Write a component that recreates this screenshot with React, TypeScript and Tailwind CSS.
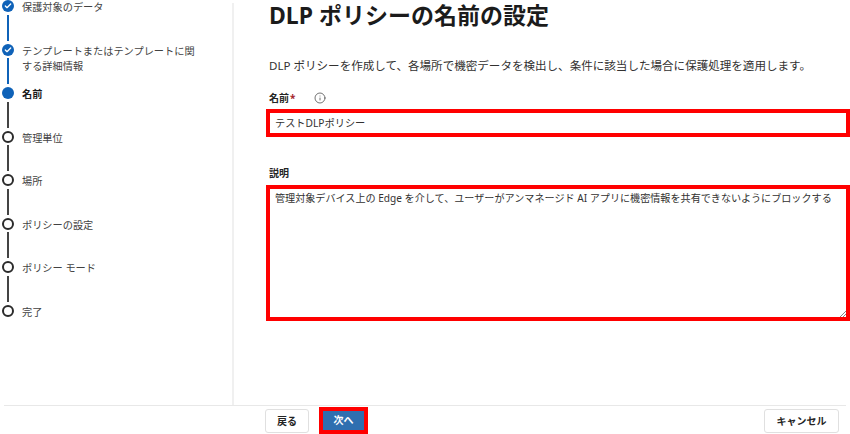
import { Check, Info } from 'lucide-react'

const font = { cjk: 'font-["Noto_Sans","Noto_Sans_CJK_JP",sans-serif]' }

const steps = [
  { label: '保護対象のデータ', status: 'done' },
  { label: 'テンプレートまたはテンプレートに関する詳細情報', status: 'done' },
  { label: '名前', status: 'current' },
  { label: '管理単位', status: 'todo' },
  { label: '場所', status: 'todo' },
  { label: 'ポリシーの設定', status: 'todo' },
  { label: 'ポリシー モード', status: 'todo' },
  { label: '完了', status: 'todo' },
]

function StepDot({ status }: { status: string }) {
  if (status === 'done') {
    return (
      <div className="w-[12px] h-[12px] rounded-full bg-[#0f62b8] flex items-center justify-center shrink-0">
        <Check className="w-[8px] h-[8px] text-white" strokeWidth={4} />
      </div>
    )
  }
  if (status === 'current') {
    return <div className="w-[12px] h-[12px] rounded-full bg-[#0f62b8] shrink-0" />
  }
  return <div className="w-[12px] h-[12px] rounded-full border-2 border-[#2b2b2b] bg-white shrink-0" />
}

function Stepper() {
  return (
    <div className="w-[234px] shrink-0 border-r-2 border-[#f0f0f0] pl-[2px] mt-[3px]">
      <div className="-mt-[3px]">
        {steps.map((step, i) => (
          <div key={step.label} className="flex gap-[8px] h-[43.5px]">
            <div className="flex flex-col items-center w-[12px]">
              <StepDot status={step.status} />
              {i < steps.length - 1 && (
                <div
                  className={`w-[1.5px] h-[26px] mt-[2.5px] ${
                    step.status === 'done' ? 'bg-[#0f62b8]' : 'bg-[#444444]'
                  }`}
                />
              )}
            </div>
            <div
              className={`w-[176px] text-[10.2px] leading-[15px] ${
                step.status === 'current' ? 'font-bold text-[#1a1a1a]' : 'text-[#424242]'
              }`}
            >
              {step.label}
            </div>
          </div>
        ))}
      </div>
    </div>
  )
}

export default function App() {
  return (
    <div className={`w-[850px] h-[434px] overflow-hidden bg-white flex flex-col ${font.cjk}`}>
      <div className="flex h-[405px] shrink-0">
        <Stepper />
        <div className="flex-1 pl-[35px] min-w-0">
          <h1 className="text-[23px] leading-[30px] font-bold text-[#1b1b1b]">DLP ポリシーの名前の設定</h1>
          <p className="mt-[28px] text-[11.55px] leading-[16px] text-[#323130]">
            DLP ポリシーを作成して、各場所で機密データを検出し、条件に該当した場合に保護処理を適用します。
          </p>
          <div className="mt-[16px] flex items-center h-[16px] text-[10px] font-bold text-[#252525]">
            名前
            <span className="ml-[1px] text-[#a4262c]">*</span>
            <Info className="ml-[19px] w-[12px] h-[12px] text-[#444444]" strokeWidth={1.5} />
          </div>
          <div className="-ml-[3px] mt-[3px] h-[28px] border-[4px] border-[#ff0000] flex items-center pl-[5px] pt-[2px] text-[10.2px] text-[#323130]">
            テストDLPポリシー
          </div>
          <div className="mt-[28px] text-[10px] leading-[16px] font-bold text-[#252525]">説明</div>
          <div className="relative -ml-[3px] mt-[4px] h-[136px] border-[4px] border-[#ff0000] pl-[5px] pt-[1px] text-[10.1px] leading-[16px] text-[#323130]">
            管理対象デバイス上の Edge を介して、ユーザーがアンマネージド AI アプリに機密情報を共有できないようにブロックする
            <svg className="absolute right-0 bottom-0 w-[6px] h-[6px] text-[#666666]" viewBox="0 0 6 6" fill="none" stroke="currentColor" strokeWidth="0.8">
              <path d="M0 6 L6 0 M3 6 L6 3" />
            </svg>
          </div>
        </div>
      </div>
      <div className="ml-[4px] mr-[4px] h-[29px] border-t border-[#e8e8e8]">
        <div className="flex items-start pl-[261px] pr-[7px] pt-[3px]">
          <button className="w-[44px] h-[24px] rounded-[3px] border border-[#e0e0e0] bg-white text-[10px] font-bold text-[#242424]">
            戻る
          </button>
          <button className="ml-[10px] -mt-[2px] w-[49px] h-[27px] border-[4px] border-[#ff0000] bg-[#2f6fb0] text-[10px] font-bold text-white">
            次へ
          </button>
          <button className="ml-auto w-[75px] h-[24px] rounded-[3px] border border-[#e0e0e0] bg-white text-[10px] font-bold text-[#242424]">
            キャンセル
          </button>
        </div>
      </div>
    </div>
  )
}
